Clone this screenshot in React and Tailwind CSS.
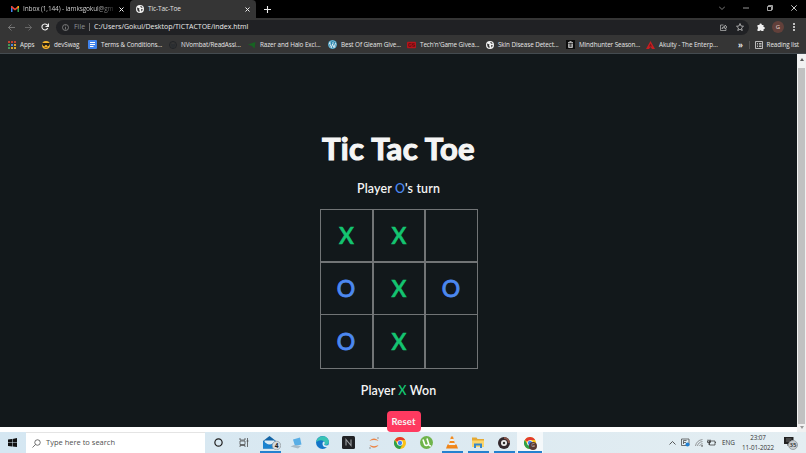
import React, { useState } from 'react';

const BOOKMARKS = [
  { icon: 'apps', label: 'Apps', box: 'w-[34px]' },
  { icon: 'cool', label: 'devSwag', box: 'w-[46px]' },
  { icon: 'doc', label: 'Terms & Conditions...', box: 'w-[81px]' },
  { icon: 'github', label: 'NVombat/ReadAssi...', box: 'w-[79px]' },
  { icon: 'razer', label: 'Razer and Halo Excl...', box: 'w-[80px]' },
  { icon: 'wordpress', label: 'Best Of Gleam Give...', box: 'w-[79px]' },
  { icon: 'tech', label: "Tech'n'Game Givea...", box: 'w-[79px]' },
  { icon: 'globe', label: 'Skin Disease Detect...', box: 'w-[80px]' },
  { icon: 'bin', label: 'Mindhunter Season...', box: 'w-[80px]' },
  { icon: 'akuity', label: 'Akuity - The Enterp...', box: 'w-[80px]' },
];

const START_BOARD = ['X', 'X', '', 'O', 'X', 'O', 'O', 'X', ''];

function BookmarkIcon({ name }) {
  switch (name) {
    case 'apps':
      return (
        <svg className="w-2 h-2 shrink-0" viewBox="0 0 8 8">
          <path fill="#c5432f" d="M0 0h2v2H0zM3 0h2v2H3zM6 0h2v2H6z" />
          <path fill="#43995a" d="M0 3h2v2H0z" />
          <path fill="#4a83dc" d="M3 3h2v2H3z" />
          <path fill="#d9a52d" d="M6 3h2v2H6zM3 6h2v2H3zM6 6h2v2H6z" />
          <path fill="#43995a" d="M0 6h2v2H0z" />
        </svg>
      );
    case 'cool':
      return (
        <svg className="w-2 h-2 shrink-0" viewBox="0 0 16 16">
          <circle cx="8" cy="8" r="8" fill="#f4b52e" />
          <path fill="#272016" d="M0 4h16l-1 4c-1 3-5 3-6 0H7c-1 3-5 3-6 0z" />
          <path d="M4 11c2 3 6 3 8 0" stroke="#7a4a12" strokeWidth="1.5" fill="none" />
        </svg>
      );
    case 'doc':
      return (
        <svg className="w-[9px] h-[9px] shrink-0" viewBox="0 0 18 18">
          <rect width="18" height="18" rx="2" fill="#3f83ee" />
          <path d="M4 5h10M4 9h10M4 13h7" stroke="#fff" strokeWidth="2" />
        </svg>
      );
    case 'github':
      return (
        <svg className="w-2 h-2 shrink-0" viewBox="0 0 16 16">
          <circle cx="8" cy="8" r="7" fill="none" stroke="#222528" strokeWidth="2" />
          <path d="M5 14v-3c-3-2-2-6 0-6l1 1h4l1-1c2 0 3 4 0 6v3" fill="#2b2e31" />
        </svg>
      );
    case 'razer':
      return (
        <svg className="w-2 h-2 shrink-0" viewBox="0 0 16 16">
          <path d="M0 7L15 2l-2 13-5-5z" fill="#176322" />
        </svg>
      );
    case 'wordpress':
      return (
        <svg className="w-[9px] h-[9px] shrink-0" viewBox="0 0 18 18">
          <circle cx="9" cy="9" r="9" fill="#2685ae" />
          <circle cx="9" cy="9" r="7.6" fill="none" stroke="#d9eef5" strokeWidth="1" />
          <path d="M3 6l4 9 2-7 3 7 3-9M2 6h4M8 6h4" stroke="#fff" strokeWidth="1.6" fill="none" />
        </svg>
      );
    case 'tech':
      return (
        <svg className="w-[9px] h-2 shrink-0" viewBox="0 0 20 16">
          <rect y="1" width="20" height="14" rx="2" fill="#b5141b" />
          <path d="M10 5H4v6h5V8M17 5h-5v3h5v3h-5" stroke="#4d0a0d" strokeWidth="1.500" fill="none" />
        </svg>
      );
    case 'globe':
      return <Globe />;
    case 'bin':
      return (
        <svg className="w-[9px] h-[9px] shrink-0" viewBox="0 0 18 18">
          <rect width="18" height="18" fill="#0c0c0c" />
          <path d="M4 5h10M7 3h4M5 7v8h8V7M7.500 7v8M10.500 7v8" stroke="#ddd" strokeWidth="1.500" fill="none" />
        </svg>
      );
    default:
      return (
        <svg className="w-[9px] h-2 shrink-0" viewBox="0 0 18 16">
          <path d="M9 0l9 16h-6l-3-4-3 4H0z" fill="#c41f22" />
          <path d="M9 5l3 6H6z" fill="#7e1315" />
        </svg>
      );
  }
}

function Globe() {
  return (
    <svg className="w-2 h-2 shrink-0" viewBox="0 0 16 16">
      <circle cx="8" cy="8" r="8" fill="#f1f1f1" />
      <path d="M2 5l5 2-1 3 2 2-2 2-3-3zM8 2l4 1 1 3-3-1zM10 8l4 1-3 4z" fill="#333" />
    </svg>
  );
}

function TabBar() {
  return (
    <div className="h-[18px] bg-black flex items-center text-[6.5px] text-[#e2e2e2] whitespace-nowrap">
      <div className="w-[130px] h-full pl-[11px] pr-[6px] flex items-center">
        <svg className="w-2 h-1.5 shrink-0" viewBox="0 0 16 12">
          <path d="M0 1h3v11H0z" fill="#4285f4" />
          <path d="M13 1h3v11h-3z" fill="#34a853" />
          <path d="M0 0h2l6 5 6-5h2v3L8 9 0 3z" fill="#ea4335" />
          <path d="M13 1l3-1v3l-3 2z" fill="#fbbc04" />
        </svg>
        <span className="ml-1 tracking-[-0.13px] bg-linear-to-r from-[#e2e2e2] from-80% to-[#333] bg-clip-text text-transparent">
          Inbox (1,144) - iamksgokul@gm
        </span>
        <Cross className="ml-auto" />
      </div>
      <div className="w-[126px] h-full pl-[6px] pr-[6px] flex items-center bg-[#353535] rounded-t-[4px]">
        <Globe />
        <span className="ml-1 tracking-[-0.1px]">Tic-Tac-Toe</span>
        <Cross className="ml-auto" />
      </div>
      <svg className="ml-2 w-[7px] h-[7px]" viewBox="0 0 7 7">
        <path d="M3.500 0v7M0 3.500h7" stroke="#eee" strokeWidth="1.100" />
      </svg>
      <div className="ml-auto mr-[9px] -mt-0.5 flex items-center gap-[18px] text-[#ccc]">
        <svg className="w-1.5 h-1.5" viewBox="0 0 6 6" fill="none" stroke="#999" strokeWidth=".8">
          <path d="M0 1.500l3 3 3-3" />
        </svg>
        <svg className="w-1.5 h-1.5" viewBox="0 0 6 6">
          <path d="M0 3h6" stroke="#bbb" strokeWidth=".8" />
        </svg>
        <svg className="w-1.5 h-1.5" viewBox="0 0 6 6" fill="none" stroke="#ccc" strokeWidth=".8">
          <path d="M.5 1.500h4v4h-4zM1.500 1.500v-1h4v4h-1" />
        </svg>
        <svg className="w-1.5 h-1.5" viewBox="0 0 6 6">
          <path d="M.3.3l5.400 5.400M5.700.3L.3 5.700" stroke="#ddd" strokeWidth=".9" />
        </svg>
      </div>
    </div>
  );
}

function Cross({ className }) {
  return (
    <svg className={`w-[5px] h-[5px] shrink-0 ${className}`} viewBox="0 0 5 5">
      <path d="M.5.5l4 4M4.500.5l-4 4" stroke="#eee" strokeWidth="1" />
    </svg>
  );
}

function AddressBar() {
  return (
    <div className="h-[18px] bg-[#353535] flex items-center pl-2">
      <svg className="w-[7px] h-[7px]" viewBox="0 0 14 14" fill="none" stroke="#8c8c8c" strokeWidth="1.500">
        <path d="M14 7H1M7 1L1 7l6 6" />
      </svg>
      <svg className="ml-[10px] w-[7px] h-[7px]" viewBox="0 0 14 14" fill="none" stroke="#777" strokeWidth="1.500">
        <path d="M0 7h13M7 1l6 6-6 6" />
      </svg>
      <svg className="ml-[9px] w-2 h-2" viewBox="0 0 16 16" fill="none" stroke="#eee" strokeWidth="2.200">
        <path d="M13.500 10A6 6 0 1 1 12 3.500l2 2" />
        <path d="M15 1v6H9" />
      </svg>
      <div className="ml-[7px] w-[693px] h-[15px] rounded-full bg-[#202124] flex items-center pl-[6px] pr-[5px] text-[7px] whitespace-nowrap">
        <svg className="w-[7px] h-[7px]" viewBox="0 0 14 14" fill="none" stroke="#999" strokeWidth="1.400">
          <circle cx="7" cy="7" r="6" />
          <path d="M7 6v5M7 3v1.500" />
        </svg>
        <span className="ml-[5px] pt-px text-[#8f9194]">File</span>
        <span className="ml-1 w-px h-2 bg-[#707070]" />
        <span className="ml-1 pt-px text-[#ececec] tracking-[-0.01px]">C:/Users/Gokul/Desktop/TICTACTOE/index.html</span>
        <svg className="ml-auto w-[7px] h-[7px]" viewBox="0 0 14 14" fill="none" stroke="#bbb" strokeWidth="1.400">
          <path d="M7 2H1v11h11V9M4 10c0-4 3-5 6-5V2l4 4-4 4V7C7 7 5 8 4 10z" />
        </svg>
        <svg className="ml-[9px] w-2 h-2" viewBox="0 0 16 16" fill="none" stroke="#ccc" strokeWidth="1.500">
          <path d="M8 1l2 5 5 .5-4 3.500 1.500 5L8 12.500 3.500 15 5 10 1 6.500 6 6z" />
        </svg>
      </div>
      <svg className="ml-2 w-2 h-2" viewBox="0 0 16 16" fill="#f1f1f1">
        <path d="M1 4h4a2.300 2.300 0 1 1 4.500 0H13v4a2.200 2.200 0 1 1 0 4.300V16H9a2.200 2.200 0 0 0-4 0H1v-4a2.200 2.200 0 0 0 0-4z" />
      </svg>
      <span className="ml-[7px] w-[12px] h-[12px] rounded-full bg-[#62403a] text-[#e8d8d4] text-[6px] flex items-center justify-center">G</span>
      <svg className="ml-[9px] w-0.5 h-2" viewBox="0 0 2 8" fill="#eee">
        <circle cx="1" cy="1" r="1" />
        <circle cx="1" cy="4" r="1" />
        <circle cx="1" cy="7" r="1" />
      </svg>
    </div>
  );
}

function BookmarksBar() {
  return (
    <div className="h-[18px] bg-[#353535] border-b border-[#444b50] flex items-center pl-2 text-[6.3px] tracking-[-0.08px] text-[#e6e6e6] whitespace-nowrap">
      {BOOKMARKS.map((b) => (
        <div key={b.label} className={`flex items-center gap-1 shrink-0 ${b.box}`}>
          <BookmarkIcon name={b.icon} />
          <span>{b.label}</span>
        </div>
      ))}
      <span className="ml-3 text-[8px] leading-none font-bold">»</span>
      <span className="ml-auto w-px h-2 bg-[#555]" />
      <svg className="ml-[5px] w-2 h-2" viewBox="0 0 16 16" fill="none" stroke="#ddd" strokeWidth="1.600">
        <path d="M1 1h14v14H1zM4 5h2M8 5h5M4 8h2M8 8h5M4 11h2M8 11h5" />
      </svg>
      <span className="ml-1 mr-[7px] tracking-[-0.11px]">Reading list</span>
    </div>
  );
}

function Tile({ value, index }) {
  const edges = `${index % 3 < 2 ? 'border-r-2' : ''} ${index < 3 ? 'border-b-2' : index < 6 ? 'border-b' : ''}`;
  return (
    <div className={`flex items-center justify-center border-[#717476] ${edges}`}>
      {value === 'X' && (
        <span className="pt-0.5 pl-px text-[22.500px] leading-none font-semibold text-[#14c471] [-webkit-text-stroke:0.6px_#14c471]">X</span>
      )}
      {value === 'O' && (
        <span className="text-[23px] leading-none text-[#4c88f0] [-webkit-text-stroke:0.9px_#4c88f0]">O</span>
      )}
    </div>
  );
}

function Game() {
  const [board, setBoard] = useState(START_BOARD);

  return (
    <main className="flex-1 h-[373px] bg-[#12181b] text-[#f5f5f5] flex flex-col items-center font-['Lato',sans-serif]">
      <h1 className="mt-[75px] h-[38px] text-[31px] leading-[38px] font-bold tracking-[0.3px] [-webkit-text-stroke:1.2px_#f5f5f5]">Tic Tac Toe</h1>
      <p className="mt-[14px] text-[12.400px] leading-4 font-semibold tracking-[0.15px]">
        Player <span className="text-[#4c88f0]">O</span>'s turn
      </p>
      <div className="mt-[12px] w-[158px] h-[160px] border border-[#717476] grid grid-cols-[53px_52px_51px] grid-rows-[53px_52px_53px]">
        {board.map((value, i) => (
          <Tile key={i} value={value} index={i} />
        ))}
      </div>
      <p className="mt-[14px] text-[12.400px] leading-4 font-semibold tracking-[0.1px]">
        Player <span className="text-[#14c471]">X</span> Won
      </p>
      {/* The button hangs over the end of the page */}
      <button
        onClick={() => setBoard(Array(9).fill(''))}
        className="relative z-10 shrink-0 mt-[12px] ml-[10px] w-[34px] h-[21px] rounded-[4px] bg-[#ff3a60] pt-px text-[9.500px] leading-none font-bold tracking-[0.1px]"
      >
        Reset
      </button>
    </main>
  );
}

function Scrollbar() {
  return (
    <div className="w-[9px] h-[378px] bg-[#f1f1f1] flex flex-col items-center py-[3px]">
      <svg className="w-1 h-[3px] mt-px" viewBox="0 0 4 3"><path d="M2 0l2 3H0z" fill="#555" /></svg>
      <div className="mt-[7px] w-[7px] h-[356px] bg-[#c1c1c1]" />
      <svg className="mt-[2px] w-1 h-[3px]" viewBox="0 0 4 3"><path d="M0 0h4L2 3z" fill="#999" /></svg>
    </div>
  );
}

function ChromeLogo() {
  return (
    <svg className="w-3 h-3" viewBox="0 0 24 24">
      <circle cx="12" cy="12" r="12" fill="#fbc116" />
      <path d="M12 12L1.600 6A12 12 0 0 1 22.400 6H12z" fill="#e33b2e" />
      <path d="M1.600 6A12 12 0 0 0 12 24l5-9-10 0z" fill="#2da04e" />
      <circle cx="12" cy="12" r="5.600" fill="#fff" />
      <circle cx="12" cy="12" r="4.300" fill="#4285f4" />
    </svg>
  );
}

const TASKS = [
  {
    name: 'mail',
    line: 'w-[21px]',
    icon: (
      <svg className="w-[18px] h-[14px] ml-1" viewBox="0 0 36 28">
        <path d="M0 10L13 0l13 10v15H0z" fill="#1465a6" />
        <path d="M3 9h20v8H3z" fill="#dcecf6" />
        <path d="M0 10l13 9 13-9v15H0z" fill="#1b83cf" />
        <circle cx="27" cy="19" r="8.500" fill="#d5dade" stroke="#929ba1" strokeWidth="1.500" />
        <text x="27" y="24" fontSize="13" fontWeight="700" textAnchor="middle" fill="#222">4</text>
      </svg>
    ),
  },
  {
    name: 'pc',
    icon: (
      <svg className="w-3 h-3" viewBox="0 0 24 24">
        <path d="M6 5l14-4 3 14-13 3z" fill="#59aee5" />
        <path d="M1 19l7-3 14 2-6 5z" fill="#a8bbc7" />
      </svg>
    ),
  },
  {
    name: 'edge',
    icon: (
      <svg className="w-[13px] h-[13px]" viewBox="0 0 26 26">
        <circle cx="13" cy="13" r="13" fill="#1374c8" />
        <path d="M1 10C4-3 25-3 26 12c0 5-6 7-10 5 3-3 1-8-4-8-5-1-9 1-11 4z" fill="#38c3b4" />
        <path d="M16 11c3 2 1 5 0 6 3 3 7 2 10 0l-2 5c-6 2-11-1-11-6 0-3 1-5 3-5z" fill="#d9edf5" />
      </svg>
    ),
  },
  {
    name: 'notion',
    icon: (
      <svg className="w-[13px] h-[13px]" viewBox="0 0 26 26">
        <rect width="26" height="26" rx="3" fill="#202225" />
        <path d="M8 19V7l10 12V7" stroke="#9b9fa2" strokeWidth="2.200" fill="none" />
      </svg>
    ),
  },
  {
    name: 'jupyter',
    icon: (
      <svg className="w-3 h-3" viewBox="0 0 24 24" fill="none">
        <path d="M3 8c4-7 14-7 18 0-5-3-13-3-18 0zM3 16c4 7 14 7 18 0-5 3-13 3-18 0z" fill="#eb8548" />
        <circle cx="20" cy="2" r="1.300" fill="#777" />
        <circle cx="4" cy="22" r="1.300" fill="#777" />
      </svg>
    ),
  },
  { name: 'chrome', icon: <ChromeLogo /> },
  {
    name: 'utorrent',
    icon: (
      <svg className="w-[13px] h-[13px]" viewBox="0 0 26 26">
        <circle cx="13" cy="13" r="13" fill="#6fb44b" />
        <path d="M6 7l3 9c1 4 5 4 7 1M14 5l4 13c1 2 3 2 4 1" stroke="#fff" strokeWidth="3.200" fill="none" />
      </svg>
    ),
  },
  {
    name: 'vlc',
    line: 'w-[21px]',
    icon: (
      <svg className="w-3 h-[13px]" viewBox="0 0 24 26">
        <path d="M3 17h18l3 8H0z" fill="#ef8418" />
        <path d="M10 1h4l5 19c-3 3-11 3-14 0z" fill="#f28c20" />
        <path d="M8.500 6h7l1 4h-9zM6.500 14h11l1 4h-13z" fill="#edf0f1" />
      </svg>
    ),
  },
  {
    name: 'explorer',
    line: 'w-[21px]',
    icon: (
      <svg className="w-3 h-[11px]" viewBox="0 0 24 22">
        <path d="M0 1h9l2 3h13v16H0z" fill="#e5aa35" />
        <path d="M0 7h24v13H0z" fill="#fbd66d" />
        <path d="M4 22v-9h16v9h-4v-5H8v5z" fill="#3788cb" />
      </svg>
    ),
  },
  {
    name: 'disc',
    line: 'w-[21px]',
    icon: (
      <svg className="w-3 h-3" viewBox="0 0 24 24">
        <circle cx="12" cy="12" r="12" fill="#33282d" />
        <path d="M12 0a12 12 0 0 1 12 12h-4a8 8 0 0 0-8-8z" fill="#8a574b" />
        <circle cx="12" cy="12" r="6" fill="#eee" />
        <circle cx="12" cy="12" r="2.500" fill="#333" />
      </svg>
    ),
  },
  {
    name: 'chrome-profile',
    line: 'w-[24px]',
    active: true,
    icon: (
      <div className="relative">
        <ChromeLogo />
        <span className="absolute left-[5px] top-[5px] w-2 h-2 rounded-full bg-[#573b36] text-[#d8c3bd] text-[5px] leading-none flex items-center justify-center">G</span>
      </div>
    ),
  },
];

function Taskbar() {
  return (
    <footer className="h-[21px] bg-linear-to-r from-[#d5e7f2] via-[#dbe9f1] to-[#e4eef2] flex items-center text-[#333]">
      <svg className="ml-2 w-[9px] h-[9px]" viewBox="0 0 18 18" fill="#111">
        <path d="M0 3l8-1v7H0zM9 2l9-2v9H9zM0 10h8v7l-8-1zM9 10h9v8l-9-1z" />
      </svg>
      <div className="ml-[9px] w-[179px] h-full bg-white border-t border-[#e4e4e4] flex items-center pl-[6px]">
        <svg className="w-[9px] h-[9px]" viewBox="0 0 18 18" fill="none" stroke="#444" strokeWidth="1.500">
          <circle cx="11" cy="7" r="5.500" />
          <path d="M7 11l-6 6" />
        </svg>
        <span className="ml-[5px] text-[7.500px] text-[#505050]">Type here to search</span>
      </div>
      <svg className="ml-[9px] w-[9px] h-[9px]" viewBox="0 0 18 18">
        <circle cx="9" cy="9" r="7.300" fill="none" stroke="#222" strokeWidth="2.400" />
      </svg>
      <svg className="ml-4 mr-[8px] w-[10px] h-[9px]" viewBox="0 0 20 18" fill="none" stroke="#444" strokeWidth="1.500">
        <path d="M2 0v4h10V0M2 6h10v7H2zM2 18v-3h10v3M17 0v18M15 6h4" />
      </svg>
      {TASKS.map((t) => (
        <div key={t.name} className={`w-[26px] h-full flex flex-col items-center ${t.active ? 'bg-[#f4f8fa]' : ''}`}>
          <div className="h-[19px] pt-0.5 flex items-center justify-center">{t.icon}</div>
          {t.line && <div className={`h-0.5 bg-[#2481cf] ${t.line}`} />}
        </div>
      ))}
      <div className="ml-auto flex items-center">
        <svg className="w-[7px] h-1" viewBox="0 0 14 8" fill="none" stroke="#333" strokeWidth="1.600">
          <path d="M1 7l6-6 6 6" />
        </svg>
        <svg className="ml-[5px] w-[9px] h-[9px]" viewBox="0 0 18 18" fill="none" stroke="#444" strokeWidth="1.500">
          <path d="M1 2h15v13H1zM5 5v7M5 5h6M5 9h5" />
          <circle cx="13" cy="13" r="4" fill="#2180d1" stroke="none" />
        </svg>
        <svg className="ml-[5px] w-2 h-2" viewBox="0 0 16 16" fill="none" stroke="#666" strokeWidth="1.300">
          <path d="M1 14C2 7 7 2 15 1M5 14c1-5 4-8 10-9M9 14c1-2 3-4 6-5M12 14l3-2v3z" />
        </svg>
        <svg className="ml-1 w-[9px] h-[7px]" viewBox="0 0 18 14" fill="none" stroke="#333" strokeWidth="1.500">
          <path d="M5 4h11v8H5zM16 7h2M2 1v3M6 1v3M1 4h6v3H1zM4 7v5" />
        </svg>
        <span className="ml-[6px] text-[6.400px]">ENG</span>
        <div className="ml-[6px] w-[34px] text-center text-[6.300px] leading-[9.500px] whitespace-nowrap tracking-[-0.08px]">
          <div>23:07</div>
          <div>11-01-2022</div>
        </div>
        <div className="relative ml-[9px] mr-[7px] w-[15px] h-3">
          <svg className="w-[10px] h-[9px]" viewBox="0 0 20 18" fill="#222">
            <path d="M0 0h19v14h-8l-4 4v-4H0z" />
            <path d="M4 4h11M4 8h8" stroke="#aaa" strokeWidth="1.200" />
          </svg>
          <span className="absolute left-[4px] top-[3px] w-[10px] h-[10px] rounded-full bg-[#c9cfd2] border border-[#9ca3a7] text-[#222] text-[6px] leading-none font-semibold flex items-center justify-center">35</span>
        </div>
      </div>
    </footer>
  );
}

export default function App() {
  return (
    <div className="w-[806px] h-[453px] overflow-hidden flex flex-col bg-white font-['Open_Sans','Noto_Sans',sans-serif]">
      <TabBar />
      <AddressBar />
      <BookmarksBar />
      <div className="h-[378px] flex items-start">
        <Game />
        <Scrollbar />
      </div>
      <Taskbar />
    </div>
  );
}
